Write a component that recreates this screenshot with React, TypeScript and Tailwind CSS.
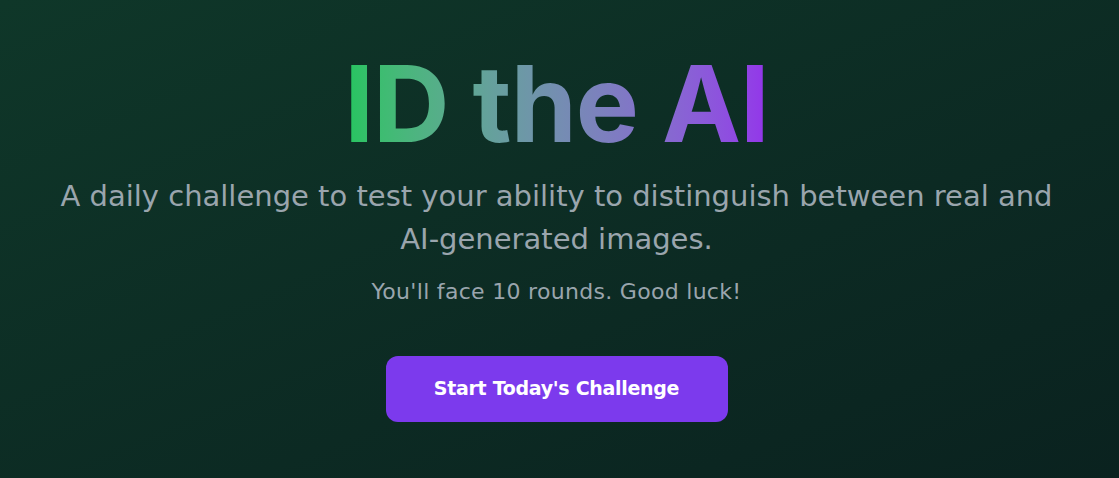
export default function App() {
  return (
    <main className="min-h-screen w-full bg-gradient-to-br from-[#0f3729] to-[#0a221f] font-['DejaVu_Sans',sans-serif]">
      <div className="flex flex-col items-center pt-[46px] pl-8 pr-[38px] text-center">
        {/* Title */}
        <h1 className="inline-block bg-gradient-to-r from-[#22c55e] to-[#9333ea] bg-clip-text font-['Inter',sans-serif] text-[106px] leading-[1.1] font-bold tracking-[-1px] text-transparent">
          ID the AI
        </h1>

        {/* Intro */}
        <p className="mt-[12px] max-w-[1000px] text-[29px] leading-[43px] text-[#9aa5ad]">
          A daily challenge to test your ability to distinguish between real and AI-generated images.
        </p>
        <p className="mt-[16px] text-[22px] leading-[30px] tracking-[0.3px] text-[#9aa5ad]">
          You'll face 10 rounds. Good luck!
        </p>

        {/* CTA */}
        <button className="mt-[49px] h-[66px] w-[342px] rounded-xl bg-[#7c3aed] text-[19px] font-semibold tracking-[-0.3px] text-white">
          Start Today's Challenge
        </button>
      </div>
    </main>
  );
}
